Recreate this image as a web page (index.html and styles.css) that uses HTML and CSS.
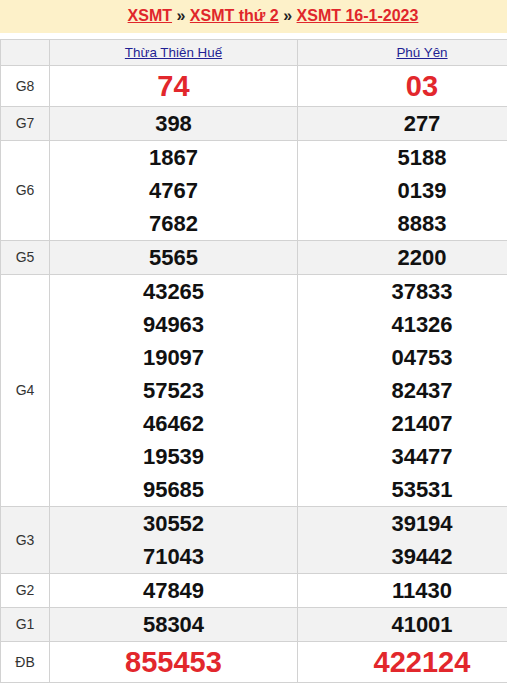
FILE: index.html
```html
<!DOCTYPE html>
<html lang="vi">
<head>
<meta charset="utf-8">
<title>XSMT 16-1-2023</title>
<link rel="stylesheet" href="styles.css">
</head>
<body>
<div class="page">
  <div class="crumb">
    <a href="#">XSMT</a> » <a href="#">XSMT thứ 2</a> » <a href="#">XSMT 16-1-2023</a>
  </div>
  <table class="kq">
    <colgroup><col class="c-label"><col class="c-prov"><col></colgroup>
    <thead>
      <tr class="alt head"><th></th><th><a href="#">Thừa Thiên Huế</a></th><th class="last"><a href="#">Phú Yên</a></th></tr>
    </thead>
    <tbody>
      <tr class="big"><td class="lbl">G8</td><td class="red">74</td><td class="red last">03</td></tr>
      <tr class="alt"><td class="lbl">G7</td><td>398</td><td class="last">277</td></tr>
      <tr><td class="lbl">G6</td><td><div>1867</div><div>4767</div><div>7682</div></td><td class="last"><div>5188</div><div>0139</div><div>8883</div></td></tr>
      <tr class="alt"><td class="lbl">G5</td><td>5565</td><td class="last">2200</td></tr>
      <tr><td class="lbl">G4</td>
        <td><div>43265</div><div>94963</div><div>19097</div><div>57523</div><div>46462</div><div>19539</div><div>95685</div></td>
        <td class="last"><div>37833</div><div>41326</div><div>04753</div><div>82437</div><div>21407</div><div>34477</div><div>53531</div></td></tr>
      <tr class="alt"><td class="lbl">G3</td><td><div>30552</div><div>71043</div></td><td class="last"><div>39194</div><div>39442</div></td></tr>
      <tr><td class="lbl">G2</td><td>47849</td><td class="last">11430</td></tr>
      <tr class="alt"><td class="lbl">G1</td><td>58304</td><td class="last">41001</td></tr>
      <tr class="big"><td class="lbl">ĐB</td><td class="red">855453</td><td class="red last">422124</td></tr>
    </tbody>
  </table>
</div>
</body>
</html>
```

FILE: styles.css
```css
html, body {
  margin: 0;
  padding: 0;
  background: #fff;
}
.page {
  width: 507px;
  font-family: "Liberation Sans", Arial, sans-serif;
}
.crumb {
  height: 33px;
  line-height: 31px;
  padding-left: 39px;
  background: #fdf1c9;
  text-align: center;
  font-size: 16px;
  font-weight: bold;
  color: #222;
  margin-bottom: 6px;
}
.crumb a {
  color: #e0262b;
  text-decoration: underline;
}
.kq {
  width: 507px;
  border-collapse: collapse;
  table-layout: fixed;
}
.c-label { width: 49px; }
.c-prov { width: 248px; }
.kq th, .kq td {
  border: 1px solid #d2d2d2;
  border-right: none;
  padding: 0;
  text-align: center;
  vertical-align: middle;
}
.kq th.last, .kq td.last {
  padding-left: 39px;
}
.kq th {
  height: 25px;
  font-size: 13.4px;
  font-weight: normal;
}
.kq th a {
  color: #1f1f94;
  text-decoration: underline;
}
.kq .alt { background: #f2f2f2; }
.kq td {
  font-size: 22px;
  font-weight: bold;
  color: #111;
  line-height: 33px;
}
.kq td.lbl {
  font-size: 14px;
  font-weight: normal;
  color: #333;
  border-right: 1px solid #d2d2d2;
}
.kq td:nth-child(2), .kq th:nth-child(1), .kq th:nth-child(2) {
  border-right: 1px solid #d2d2d2;
}
.kq .big td { line-height: 40px; }
.kq td.red {
  color: #e2272c;
  font-size: 29px;
}
```
